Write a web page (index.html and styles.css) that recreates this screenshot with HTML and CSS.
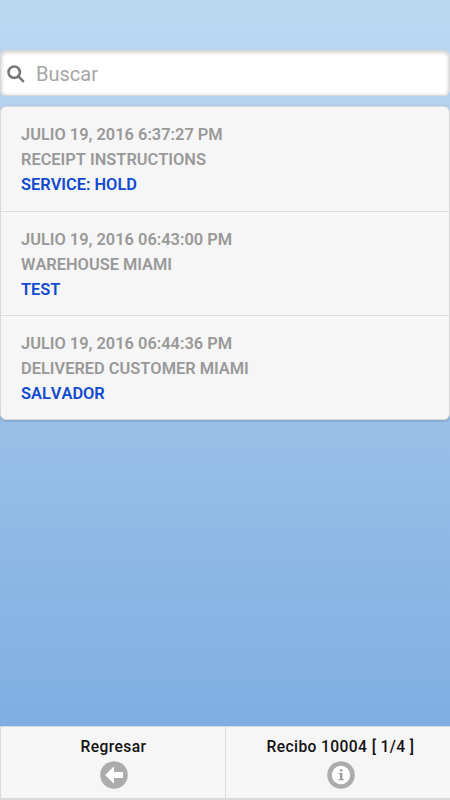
FILE: index.html
```html
<!DOCTYPE html>
<html lang="es">
<head>
    <meta charset="UTF-8">
    <meta name="viewport" content="width=device-width, initial-scale=1.0">
    <title>Recibo 10004</title>
    <link rel="stylesheet" href="styles.css">
</head>
<body>

    <!-- Buscador y lista de eventos -->
    <main class="content">
        <label class="search">
            <svg class="search-icon" viewBox="0 0 18 18">
                <circle cx="7.2" cy="7.2" r="5.7"/>
                <path d="M11.2 11.2L16.8 16.8"/>
            </svg>
            <input class="search-input" type="text" placeholder="Buscar">
        </label>

        <ul class="list">
            <li class="item">
                <p>JULIO 19, 2016 6:37:27 PM</p>
                <p>RECEIPT INSTRUCTIONS</p>
                <p class="note">SERVICE: HOLD</p>
            </li>
            <li class="item">
                <p>JULIO 19, 2016 06:43:00 PM</p>
                <p>WAREHOUSE MIAMI</p>
                <p class="note">TEST</p>
            </li>
            <li class="item">
                <p>JULIO 19, 2016 06:44:36 PM</p>
                <p>DELIVERED CUSTOMER MIAMI</p>
                <p class="note">SALVADOR</p>
            </li>
        </ul>
    </main>

    <!-- Barra inferior -->
    <footer class="navbar">
        <a class="nav-btn" href="#">
            <span>Regresar</span>
            <svg class="nav-icon" viewBox="0 0 28 28">
                <circle cx="14" cy="14" r="13.8" fill="#acacac"/>
                <path d="M5.2 14L14 5.2V11H23V17H14V22.8Z" fill="#fff"/>
            </svg>
        </a>
        <a class="nav-btn" href="#">
            <span>Recibo 10004 [ 1/4 ]</span>
            <svg class="nav-icon" viewBox="0 0 28 28">
                <circle cx="14" cy="14" r="13.8" fill="#acacac"/>
                <circle cx="14" cy="14" r="9.2" fill="#fff"/>
                <path d="M12.8 8.2h2.6v2.2h-2.6zM11.6 12h3.8v6h1.3v1.2h-5.1V18h1.4v-4.8h-1.4z" fill="#9c9c9c"/>
            </svg>
        </a>
    </footer>

</body>
</html>
```

FILE: styles.css
```css
* {
    box-sizing: border-box;
}

body {
    margin: 0;
    height: 100vh;
    display: flex;
    flex-direction: column;
    font-family: Roboto, sans-serif;
    background: linear-gradient(#bdd8f1, #78aae0);
    overflow: hidden;
}

.content {
    flex: 1;
    padding-top: 50px;
}

/* Buscador */
.search {
    display: flex;
    align-items: center;
    height: 46px;
    padding: 1px 6px 0;
    border: 1px solid #d8d8d8;
    border-radius: 6px;
    background: #fff;
    box-shadow: inset 0 1px 4px rgba(0, 0, 0, 0.24);
}

.search-icon {
    width: 18px;
    height: 18px;
    fill: none;
    stroke: #777;
    stroke-width: 2.6;
}

.search-input {
    flex: 1;
    min-width: 0;
    margin-left: 11px;
    padding: 0;
    border: 0;
    outline: 0;
    background: transparent;
    font: 20px Roboto, sans-serif;
}

.search-input::placeholder {
    color: #a6a6a6;
}

/* Lista de eventos */
.list {
    margin: 10px 0 0;
    padding: 0;
    list-style: none;
    border: 1px solid #d9d9d9;
    border-radius: 6px;
    background: #f6f6f6;
    box-shadow: 0 1px 3px rgba(0, 0, 0, 0.2);
}

.item {
    height: 104px;
    padding: 15px 20px 0;
    border-bottom: 1px solid #dadada;
}

.item:first-child {
    height: 105px;
}

.item:last-child {
    height: 103px;
    border-bottom: 0;
}

.item p {
    margin: 0;
    font-size: 16.4px;
    font-weight: 600;
    font-kerning: none;
    line-height: 25px;
    color: #999;
}

.item .note {
    color: #1149cf;
}

/* Barra inferior */
.navbar {
    display: flex;
    height: 74px;
    border: 1px solid #dadada;
    border-width: 1px 0 2px 1px;
    background: #f6f6f6;
}

.nav-btn {
    width: 224px;
    display: flex;
    flex-direction: column;
    align-items: center;
    padding-top: 10px;
    padding-left: 1px;
    font-size: 15.6px;
    font-weight: 500;
    line-height: 20px;
    letter-spacing: 0.4px;
    color: #111;
    text-decoration: none;
}

.nav-btn + .nav-btn {
    flex: 1;
    border-left: 1px solid #dadada;
    padding-left: 5px;
}

.nav-icon {
    width: 28px;
    height: 28px;
    margin-top: 4px;
}
```
